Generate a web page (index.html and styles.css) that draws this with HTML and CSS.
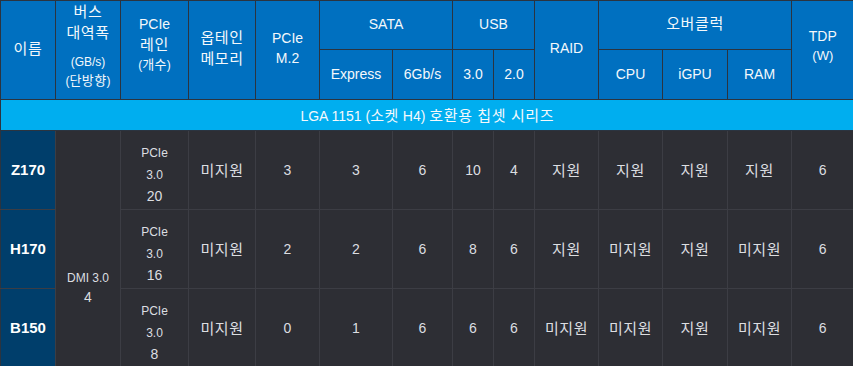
FILE: index.html
```html
<!DOCTYPE html>
<html lang="ko">
<head>
<meta charset="utf-8">
<title>인텔 100 시리즈 칩셋</title>
<link rel="stylesheet" href="styles.css">
</head>
<body>
<table class="chipset">
  <colgroup>
    <col class="w55"><col class="w65"><col class="w68"><col class="w67"><col class="w64">
    <col class="w73"><col class="w60"><col class="w41"><col class="w41"><col class="w64">
    <col class="w64"><col class="w65"><col class="w64"><col class="w62">
  </colgroup>
  <thead>
    <tr class="h1">
      <th rowspan="2" class="rs"><span class="ko">이름</span></th>
      <th rowspan="2" class="rs bus"><span class="big"><span class="ko">버스</span><br><span class="ko">대역폭</span></span><span class="small">(GB/s)<br>(<span class="ko">단방향</span>)</span></th>
      <th rowspan="2" class="rs lane-h"><span class="big">PCIe<br><span class="ko">레인</span></span><span class="small">(<span class="ko">개수</span>)</span></th>
      <th rowspan="2" class="rs"><span class="big"><span class="ko">옵테인</span><br><span class="ko">메모리</span></span></th>
      <th rowspan="2" class="rs"><span class="big">PCIe<br>M.2</span></th>
      <th colspan="2" class="cs">SATA</th>
      <th colspan="2" class="cs">USB</th>
      <th rowspan="2" class="rs">RAID</th>
      <th colspan="3" class="cs"><span class="ko">오버클럭</span></th>
      <th rowspan="2" class="rs tdp-h"><span class="big">TDP</span><span class="small tdp">(W)</span></th>
    </tr>
    <tr class="h2">
      <th>Express</th>
      <th>6Gb/s</th>
      <th>3.0</th>
      <th>2.0</th>
      <th>CPU</th>
      <th>iGPU</th>
      <th>RAM</th>
    </tr>
  </thead>
  <tbody>
    <tr class="band">
      <td colspan="14">LGA 1151 (<span class="ko">소켓</span> H4) <span class="ko">호환용 칩셋 시리즈</span></td>
    </tr>
    <tr class="row">
      <th class="name">Z170</th>
      <td rowspan="4" class="dmi"><span class="small">DMI 3.0</span><span class="dmi-n">4</span></td>
      <td class="lanes"><span class="l1">PCIe</span><span class="l2">3.0</span><span class="l3">20</span></td>
      <td><span class="ko">미지원</span></td><td>3</td><td>3</td><td>6</td><td>10</td><td>4</td>
      <td><span class="ko">지원</span></td><td><span class="ko">지원</span></td><td><span class="ko">지원</span></td><td><span class="ko">지원</span></td><td>6</td>
    </tr>
    <tr class="row">
      <th class="name">H170</th>
      <td class="lanes"><span class="l1">PCIe</span><span class="l2">3.0</span><span class="l3">16</span></td>
      <td><span class="ko">미지원</span></td><td>2</td><td>2</td><td>6</td><td>8</td><td>6</td>
      <td><span class="ko">지원</span></td><td><span class="ko">미지원</span></td><td><span class="ko">지원</span></td><td><span class="ko">미지원</span></td><td>6</td>
    </tr>
    <tr class="row">
      <th class="name">B150</th>
      <td class="lanes"><span class="l1">PCIe</span><span class="l2">3.0</span><span class="l3">8</span></td>
      <td><span class="ko">미지원</span></td><td>0</td><td>1</td><td>6</td><td>6</td><td>6</td>
      <td><span class="ko">미지원</span></td><td><span class="ko">미지원</span></td><td><span class="ko">지원</span></td><td><span class="ko">미지원</span></td><td>6</td>
    </tr>
    <tr class="row">
      <th class="name">Q170</th>
      <td class="lanes"><span class="l1">PCIe</span><span class="l2">3.0</span><span class="l3">20</span></td>
      <td><span class="ko">미지원</span></td><td>3</td><td>3</td><td>6</td><td>10</td><td>4</td>
      <td><span class="ko">지원</span></td><td><span class="ko">미지원</span></td><td><span class="ko">지원</span></td><td><span class="ko">미지원</span></td><td>6</td>
    </tr>
  </tbody>
</table>
</body>
</html>
```
FILE: styles.css
```css
html, body {
  margin: 0;
  padding: 0;
  overflow: hidden;
  background: #2d2e34;
}

.chipset {
  width: 853px;
  table-layout: fixed;
  border-collapse: collapse;
  font-family: "Liberation Sans", Arial, "Noto Sans CJK KR", sans-serif;
  font-size: 14px;
  line-height: 20px;
  text-align: center;
  color: #dcdee1;
}

.ko {
  font-family: "Noto Sans CJK KR", "Liberation Sans", sans-serif;
  font-size: 15px;
  letter-spacing: 0.6px;
}

.w41 { width: 41px; }
.w55 { width: 55px; }
.w60 { width: 60px; }
.w62 { width: 62px; }
.w64 { width: 64px; }
.w65 { width: 65px; }
.w67 { width: 67px; }
.w68 { width: 68px; }
.w73 { width: 73px; }

.chipset th,
.chipset td {
  padding: 0;
  vertical-align: middle;
  font-weight: normal;
}

/* header */
.chipset thead th {
  background: #0070c0;
  color: #f4f8fb;
  border: 1px solid #2b3440;
  line-height: 20px;
}
.chipset thead th:last-child { border-right: none; }
.h1 th { height: 48px; }
.h1 .cs { padding-bottom: 3px; height: 45px; }
.h2 th { height: 48px; padding-bottom: 1px; }
.chipset thead .rs { padding-bottom: 4px; }
.chipset thead .bus { padding-bottom: 9px; }
.chipset thead .lane-h { padding-bottom: 12px; }
.chipset thead .tdp-h { padding-bottom: 8px; }

.big { display: block; line-height: 20px; }
.small { display: block; font-size: 12px; line-height: 18px; }
.small .ko { font-size: 13px; letter-spacing: 0.3px; }
.bus .small { padding-top: 11px; line-height: 17px; }
.small.tdp { font-size: 13px; line-height: 20px; }

/* band */
.band td {
  background: #00aeef;
  color: #f4f9fc;
  height: 30px;
  border-top: 1px solid #2b3440;
  border-bottom: 1px solid #2b3440;
  border-left: 1px solid #2b3440;
}

/* body rows */
.row td,
.row th {
  height: 78px;
  border: 1px solid #3c3d44;
  background: #2d2e34;
}
.row .name {
  background: #003e6b;
  color: #ffffff;
  font-weight: bold;
  font-size: 15px;
  border-left: 1px solid #2b3440;
}

.row .lanes { padding-top: 6px; height: 72px; }
.lanes span { display: block; }
.lanes .l1 { font-size: 12px; line-height: 24px; }
.lanes .l2 { font-size: 12px; line-height: 21px; }
.lanes .l3 { font-size: 14px; line-height: 20px; }

.dmi .small { line-height: 18px; }
.dmi-n { display: block; line-height: 21px; }
```
